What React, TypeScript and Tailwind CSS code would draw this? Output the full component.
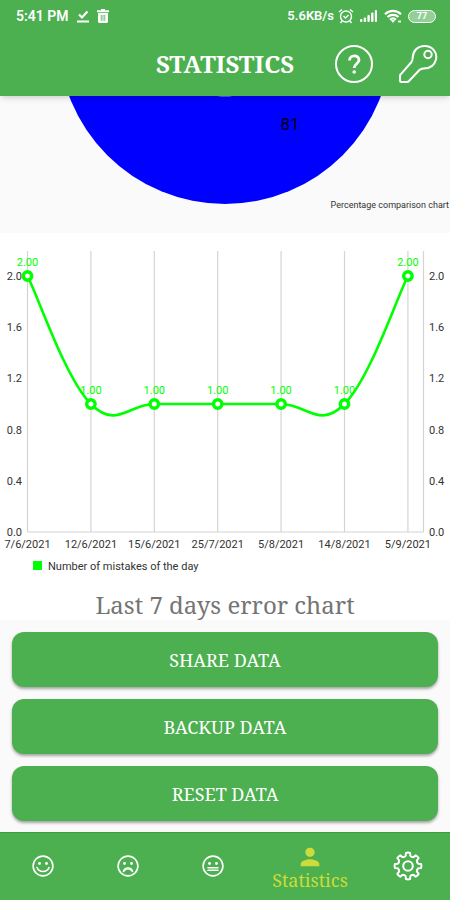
import React from "react";
import { MdPerson } from "react-icons/md";

const CHART = { top: 18, bottom: 299, left: 27.5, right: 423.5, step: 63.4, unit: 128 };

const entries = [
  { date: "7/6/2021", value: 2 },
  { date: "12/6/2021", value: 1 },
  { date: "15/6/2021", value: 1 },
  { date: "25/7/2021", value: 1 },
  { date: "5/8/2021", value: 1 },
  { date: "14/8/2021", value: 1 },
  { date: "5/9/2021", value: 2 },
];

const ticks = [2.0, 1.6, 1.2, 0.8, 0.4, 0.0];

const toY = (value: number) => CHART.bottom - value * CHART.unit;

const points = entries.map((e, i) => ({
  x: CHART.left + i * CHART.step,
  y: toY(e.value),
}));

// Cubic line: each tangent is 20% of the distance between both neighbours
const tangent = (i: number) => {
  const prev = points[Math.max(i - 1, 0)];
  const next = points[Math.min(i + 1, points.length - 1)];
  return { x: (next.x - prev.x) * 0.2, y: (next.y - prev.y) * 0.2 };
};

const linePath = points
  .map((p, i) => {
    if (i === 0) return `M${p.x} ${p.y}`;
    const a = points[i - 1];
    const ta = tangent(i - 1);
    const tb = tangent(i);
    return `C${a.x + ta.x} ${a.y + ta.y} ${p.x - tb.x} ${p.y - tb.y} ${p.x} ${p.y}`;
  })
  .join(" ");

// Eight teeth around a 30x30 box
const polar = (r: number, deg: number) => {
  const a = (deg * Math.PI) / 180;
  return `${(15 + r * Math.cos(a)).toFixed(2)} ${(15 + r * Math.sin(a)).toFixed(2)}`;
};

const gearPath =
  Array.from({ length: 8 }, (_, i) => {
    const c = i * 45;
    return `${i === 0 ? "M" : "L"}${polar(10.5, c - 13)}L${polar(13.2, c - 9)}Q${polar(13.8, c)} ${polar(13.2, c + 9)}L${polar(10.5, c + 13)}Q${polar(9.4, c + 22.5)} ${polar(10.5, c + 32)}`;
  }).join("") + "Z";

const StatusBar: React.FC = () => (
  <div className="flex h-8 items-center justify-between pl-4 pr-3.5 text-[13px] font-semibold text-white">
    <div className="flex items-center gap-2">
      <span className="text-sm">5:41 PM</span>
      <svg viewBox="0 0 12 13" className="h-[13px] w-3" fill="none" stroke="currentColor" strokeWidth="2.200">
        <path d="M2 4.500 5 7.500 10.500 1.500M0 11.500h12" />
      </svg>
      <svg viewBox="0 0 12 14" className="h-3.5 w-3" fill="currentColor">
        <path d="M4 0h4v1.200h4V3.200H0V1.200h4z" />
        <path
          fillRule="evenodd"
          d="M1 4h10v8.500c0 .8-.7 1.500-1.500 1.500h-7C1.700 14 1 13.300 1 12.500zM3.800 5.800v6h.8v-6zm1.800 0v6h.8v-6zm1.800 0v6h.8v-6z"
        />
      </svg>
    </div>
    <div className="flex items-center gap-1">
      <span>5.6KB/s</span>
      <svg viewBox="0 0 16 16" className="h-4 w-4" fill="none" stroke="currentColor" strokeWidth="1.400">
        <circle cx="8" cy="8.500" r="5.500" />
        <path d="M5.500 8 7.500 10 10.500 7M1 4 4 1.500M15 4 12 1.500M4 13l-1.500 2M12 13l1.500 2" />
      </svg>
      <svg viewBox="0 0 18 14" className="ml-0.5 h-3.5 w-[18px]" fill="currentColor">
        <rect x="0" y="10" width="2.400" height="3" rx="1" />
        <rect x="3.700" y="8.500" width="2.400" height="4.500" rx="1" />
        <rect x="7.400" y="6" width="2.400" height="7" rx="1" />
        <rect x="11.100" y="3.500" width="2.400" height="9.500" rx="1" />
        <rect x="14.800" y="1" width="2.200" height="12" rx="1" />
      </svg>
      <svg viewBox="0 0 18 14" className="ml-0.5 h-3.5 w-[18px]" fill="none" stroke="currentColor" strokeWidth="2.200">
        <path d="M1 5.200a11.500 11.500 0 0 1 16 0M3.500 8a8 8 0 0 1 11 0M6 10.700a4.500 4.500 0 0 1 6 0" />
        <path d="M9 14 6.800 11h4.400z" fill="currentColor" stroke="none" />
        <path d="M14 12.500h3" strokeWidth="1.800" />
      </svg>
      <span className="ml-0.5 flex h-[13px] w-7 items-center justify-center rounded-full border border-white bg-white/40 text-[9px] leading-none font-bold">
        77
      </span>
    </div>
  </div>
);

const Header: React.FC = () => (
  <header className="relative z-10 bg-[#4caf50] shadow-md">
    <StatusBar />
    <div className="relative flex h-16 items-center justify-center">
      <h1 className="font-[Noto_Serif,DejaVu_Serif_Condensed,Liberation_Serif,serif] text-2xl font-bold text-white">
        STATISTICS
      </h1>
      <div className="absolute right-3 flex items-center gap-6 text-white">
        <button aria-label="Help">
          <svg viewBox="0 0 40 40" className="h-10 w-10" fill="none" stroke="currentColor" strokeWidth="2">
            <circle cx="20" cy="20" r="18" />
            <path d="M15.500 16.500c0-6 9.500-6 9.500-.500 0 3.800-4.800 3.800-4.800 8" strokeWidth="2.800" />
            <circle cx="20.200" cy="28" r="1.800" fill="currentColor" stroke="none" />
          </svg>
        </button>
        <button aria-label="Unlock">
          <svg viewBox="0 0 40 40" className="h-10 w-10" fill="none" stroke="currentColor" strokeWidth="2" strokeLinejoin="round">
            <path d="M26.500 2C34.500 2 39.500 8.500 38 15.500c-1.500 6-6.500 9-12.500 9-2.500.2-4 .8-5 2.500L11 37c-.6.700-1.200 1-2 1H3.500c-1 0-1.500-.5-1.500-1.500v-4.500c0-.7.200-1.200.7-1.700L13.500 18c1-1.300 1.200-2.500 1.200-4.500C15 7 19.500 2 26.500 2z" />
            <circle cx="30" cy="10.500" r="3.700" />
          </svg>
        </button>
      </div>
    </div>
  </header>
);

const PieChart: React.FC = () => (
  <svg viewBox="0 0 450 137" className="block w-full" role="img" aria-label="Percentage comparison chart">
    <circle cx="225" cy="-58.500" r="166.500" fill="#0000ff" />
    <circle cx="225" cy="-58.500" r="59" fill="#a5a5ff" />
    <text x="290" y="34" textAnchor="middle" className="fill-black text-[17px]">
      81
    </text>
    <text x="449" y="112" textAnchor="end" className="fill-[#333333] text-[9px]">
      Percentage comparison chart
    </text>
  </svg>
);

const LineChart: React.FC = () => (
  <svg viewBox="0 0 450 345" className="block w-full" role="img" aria-label="Last 7 days error chart">
    <g stroke="#d4d4d4" strokeWidth="1.200">
      {points.map((p) => (
        <line key={p.x} x1={p.x} x2={p.x} y1={CHART.top} y2={CHART.bottom} />
      ))}
      <line x1={CHART.right} x2={CHART.right} y1={CHART.top} y2={CHART.bottom} />
      <line x1={CHART.left} x2={CHART.right} y1={CHART.bottom} y2={CHART.bottom} />
    </g>

    <g className="fill-[#333333] text-[11px]">
      {ticks.map((t) => (
        <React.Fragment key={t}>
          <text x="22" y={toY(t) + 4} textAnchor="end">
            {t.toFixed(1)}
          </text>
          <text x="429" y={toY(t) + 4}>
            {t.toFixed(1)}
          </text>
        </React.Fragment>
      ))}
      {entries.map((e, i) => (
        <text key={e.date} x={points[i].x} y="315" textAnchor="middle">
          {e.date}
        </text>
      ))}
    </g>

    <path d={linePath} fill="none" stroke="#00ff00" strokeWidth="2.600" />
    {entries.map((e, i) => (
      <g key={e.date}>
        <circle cx={points[i].x} cy={points[i].y} r="4.200" fill="#ffffff" stroke="#00ff00" strokeWidth="3.400" />
        <text x={points[i].x} y={points[i].y - 10} textAnchor="middle" className="fill-[#00ff00] text-[11px]">
          {e.value.toFixed(2)}
        </text>
      </g>
    ))}

    {/* Legend */}
    <rect x="33" y="328" width="9" height="9" fill="#00ff00" />
    <text x="48" y="337" className="fill-[#333333] text-[11px]">
      Number of mistakes of the day
    </text>
  </svg>
);

const ActionButton: React.FC<{ label: string }> = ({ label }) => (
  <button className="h-[55px] w-full rounded-xl bg-[#4caf50] font-[Noto_Serif,DejaVu_Serif_Condensed,Liberation_Serif,serif] text-lg text-white shadow-[0_2px_3px_rgba(0,0,0,0.35)]">
    {label}
  </button>
);

const FaceIcon: React.FC<{ mouth: string }> = ({ mouth }) => (
  <svg viewBox="0 0 22 22" className="h-[22px] w-[22px]" fill="none" stroke="currentColor" strokeWidth="1.600" strokeLinecap="round">
    <circle cx="11" cy="11" r="9.900" />
    <circle cx="7.500" cy="8.500" r="1.400" fill="currentColor" stroke="none" />
    <circle cx="14.500" cy="8.500" r="1.400" fill="currentColor" stroke="none" />
    <path d={mouth} />
  </svg>
);

const BottomNav: React.FC = () => (
  <nav className="flex h-[68px] items-center border-t border-[#3d9a41] bg-[#4caf50] pb-0.5 text-white">
    <button aria-label="Happy" className="flex flex-1 justify-center">
      <FaceIcon mouth="M5 12.500c2 5.300 10 5.300 12 0" />
    </button>
    <button aria-label="Sad" className="flex flex-1 justify-center">
      <FaceIcon mouth="M6.500 16.500c1-4.700 8-4.700 9 0M7.500 15.500c2-2 5-2 7 0" />
    </button>
    <button aria-label="Neutral" className="flex flex-1 justify-center">
      <FaceIcon mouth="M6 12.700h10M6 15.200h10" />
    </button>
    <button className="flex w-[110px] flex-col items-center text-[#cddc39]">
      <MdPerson className="h-7 w-7" />
      <span className="font-[Noto_Serif,DejaVu_Serif_Condensed,Liberation_Serif,serif] text-lg leading-[18px]">
        Statistics
      </span>
    </button>
    <button aria-label="Settings" className="flex flex-1 justify-center">
      <svg viewBox="0 0 30 30" className="h-[30px] w-[30px]" fill="none" stroke="currentColor" strokeWidth="2" strokeLinejoin="round">
        <path d={gearPath} />
        <circle cx="15" cy="15" r="4.800" />
      </svg>
    </button>
  </nav>
);

const App: React.FC = () => {
  return (
    <div className="flex min-h-screen flex-col bg-[#fafafa] font-[Roboto,sans-serif]">
      <Header />
      <main className="flex-1">
        <PieChart />
        <section className="bg-white">
          <LineChart />
          <h2 className="pt-3 text-center font-[Noto_Serif,DejaVu_Serif_Condensed,Liberation_Serif,serif] text-2xl leading-[30px] text-[#757575]">
            Last 7 days error chart
          </h2>
        </section>
        <div className="flex flex-col gap-3 px-3 pt-3 pb-2">
          <ActionButton label="SHARE DATA" />
          <ActionButton label="BACKUP DATA" />
          <ActionButton label="RESET DATA" />
        </div>
      </main>
      <BottomNav />
    </div>
  );
};

export default App;
